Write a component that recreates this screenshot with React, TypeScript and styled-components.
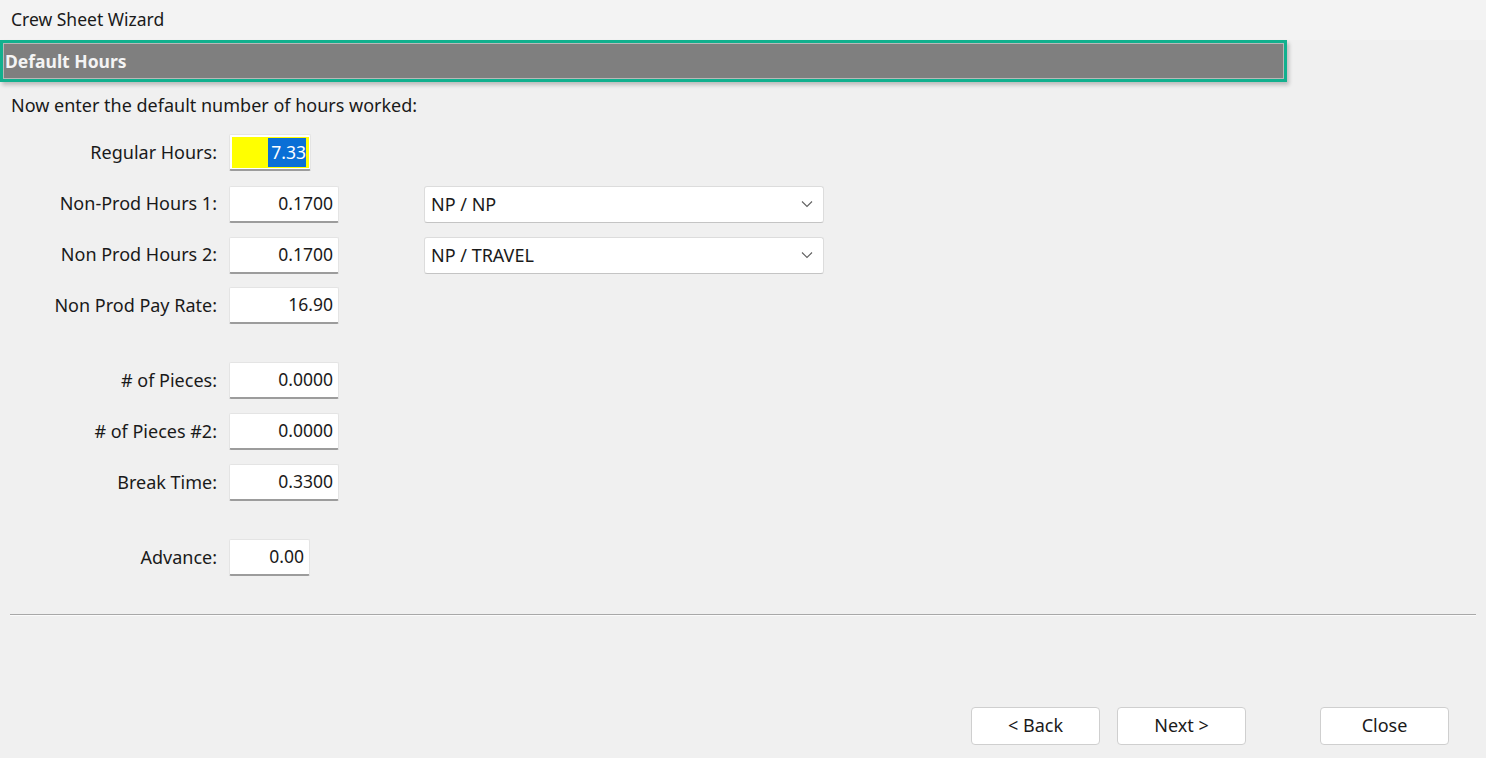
import styled, { createGlobalStyle } from "styled-components";

// Global page setup
const GlobalStyle = createGlobalStyle`
  html, body {
    margin: 0;
    padding: 0;
    background: #f0f0f0;
    font-family: "Noto Sans", "Open Sans", sans-serif;
    color: #1a1a1a;
  }
`;

// Styled Components
const Window = styled.div`
  width: 1486px;
  height: 758px;
  display: flex;
  flex-direction: column;
  background: #f0f0f0;
  overflow: hidden;
`;

const TitleBar = styled.div`
  height: 40px;
  display: flex;
  align-items: center;
  padding-left: 11px;
  background: #f3f3f3;
  font-size: 17.5px;
  box-sizing: border-box;
  padding-bottom: 2px;
`;

const StepHeader = styled.div`
  width: 1287px;
  height: 42px;
  box-sizing: border-box;
  border: 3px solid #12b08e;
  background: #7f7f7f;
  box-shadow: inset 0 0 0 1px #b8b8b8, 2px 3px 4px rgba(0, 0, 0, 0.22);
  display: flex;
  align-items: center;
  padding-left: 2px;
  color: #f4f4f4;
  font-weight: 700;
  font-size: 17.5px;
`;

const Intro = styled.p`
  margin: 11px 0 0 11px;
  font-size: 18px;
  line-height: 24px;
`;

const Form = styled.div`
  display: flex;
  flex-direction: column;
  gap: 14px;
  margin-top: 17px;
`;

const Row = styled.div<{ $spaced?: boolean }>`
  display: grid;
  grid-template-columns: 217px 110px 424px;
  column-gap: 12px;
  height: 37px;
  align-items: center;
  margin-top: ${(p) => (p.$spaced ? "24px" : "0")};
`;

const Label = styled.span`
  text-align: right;
  font-size: 18px;
  padding-bottom: 2px;
`;

const NumberBox = styled.div<{ $width: number; $highlight?: boolean }>`
  width: ${(p) => p.$width}px;
  height: 37px;
  box-sizing: border-box;
  background: #ffffff;
  border: 1px solid #e4e4e4;
  border-bottom: 2px solid #9c9c9c;
  border-radius: 2px;
  display: flex;
  align-items: center;
  justify-content: flex-end;
  padding: ${(p) => (p.$highlight ? "2px 1px 1px 2px" : "0 5px 2px 6px")};
  font-size: 17.5px;
`;

const HighlightFill = styled.div`
  flex: 1;
  align-self: stretch;
  background: #ffff00;
  display: flex;
  align-items: center;
  justify-content: flex-end;
  padding-right: 3px;
`;

const Selected = styled.span`
  background: #0a6fd6;
  color: #ffffff;
  padding: 2px 0 3px 3px;
`;

const Select = styled.div`
  grid-column: 3;
  align-self: start;
  width: 400px;
  height: 37px;
  margin-top: 1px;
  margin-left: 73px;
  box-sizing: border-box;
  background: #ffffff;
  border: 1px solid #dcdcdc;
  border-bottom-color: #c4c4c4;
  border-radius: 3px;
  display: flex;
  align-items: center;
  justify-content: space-between;
  padding: 0 10px 2px 6px;
  font-size: 18px;
`;

const Divider = styled.hr`
  margin: 38px 10px 0 10px;
  border: none;
  border-top: 1px solid #a8a8a8;
  border-bottom: 1px solid #fbfbfb;
`;

const Footer = styled.div`
  display: flex;
  justify-content: flex-end;
  align-items: center;
  margin-top: 91px;
  padding-right: 37px;
`;

const Button = styled.button<{ $gapBefore?: number }>`
  width: 129px;
  height: 38px;
  box-sizing: border-box;
  background: #ffffff;
  border: 1px solid #cfcfcf;
  border-radius: 4px;
  font-family: inherit;
  font-size: 18px;
  color: #1a1a1a;
  padding: 0 0 2px 0;
  margin-left: ${(p) => p.$gapBefore ?? 0}px;
`;

interface Field {
  label: string;
  value: string;
  width: number;
  spaced?: boolean;
  highlight?: boolean;
  option?: string;
}

const fields: Field[] = [
  { label: "Regular Hours:", value: "7.33", width: 82, highlight: true },
  { label: "Non-Prod Hours 1:", value: "0.1700", width: 110, option: "NP / NP" },
  { label: "Non Prod Hours 2:", value: "0.1700", width: 110, option: "NP / TRAVEL" },
  { label: "Non Prod Pay Rate:", value: "16.90", width: 110 },
  { label: "# of Pieces:", value: "0.0000", width: 110, spaced: true },
  { label: "# of Pieces #2:", value: "0.0000", width: 110 },
  { label: "Break Time:", value: "0.3300", width: 110 },
  { label: "Advance:", value: "0.00", width: 81, spaced: true },
];

function Chevron() {
  return (
    <svg width="12" height="8" viewBox="0 0 12 8" fill="none">
      <path d="M1 1.5 L6 6.5 L11 1.5" stroke="#606060" strokeWidth="1.1" />
    </svg>
  );
}

function App() {
  return (
    <Window>
      <GlobalStyle />
      <TitleBar>Crew Sheet Wizard</TitleBar>
      <StepHeader>Default Hours</StepHeader>
      <Intro>Now enter the default number of hours worked:</Intro>
      <Form>
        {fields.map((f) => (
          <Row key={f.label} $spaced={f.spaced}>
            <Label>{f.label}</Label>
            <NumberBox $width={f.width} $highlight={f.highlight}>
              {f.highlight ? (
                <HighlightFill>
                  <Selected>{f.value}</Selected>
                </HighlightFill>
              ) : (
                f.value
              )}
            </NumberBox>
            {f.option && (
              <Select>
                <span>{f.option}</span>
                <Chevron />
              </Select>
            )}
          </Row>
        ))}
      </Form>
      <Divider />
      <Footer>
        <Button>&lt; Back</Button>
        <Button $gapBefore={17}>Next &gt;</Button>
        <Button $gapBefore={74}>Close</Button>
      </Footer>
    </Window>
  );
}

export default App;
